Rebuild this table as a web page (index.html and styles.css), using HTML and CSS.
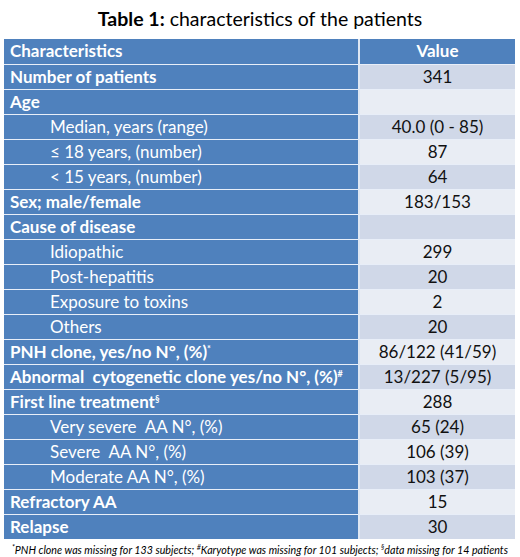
FILE: index.html
```html
<!DOCTYPE html>
<html>
<head>
<meta charset="utf-8">
<link rel="stylesheet" href="styles.css">
</head>
<body>
<div class="page">
  <h1 class="title"><b>Table 1:</b> characteristics of the patients</h1>
  <table class="tbl">
    <thead>
      <tr><th class="lbl">Characteristics</th><th class="val">Value</th></tr>
    </thead>
    <tbody>
      <tr class="dk"><td class="lbl main">Number of patients</td><td class="val">341</td></tr>
      <tr class="lt"><td class="lbl main">Age</td><td class="val"></td></tr>
      <tr class="dk"><td class="lbl sub">Median, years (range)</td><td class="val">40.0 (0 - 85)</td></tr>
      <tr class="lt"><td class="lbl sub">≤ 18 years, (number)</td><td class="val">87</td></tr>
      <tr class="dk"><td class="lbl sub">&lt; 15 years, (number)</td><td class="val">64</td></tr>
      <tr class="lt"><td class="lbl main">Sex; male/female</td><td class="val">183/153</td></tr>
      <tr class="dk"><td class="lbl main">Cause of disease</td><td class="val"></td></tr>
      <tr class="lt"><td class="lbl sub">Idiopathic</td><td class="val">299</td></tr>
      <tr class="dk"><td class="lbl sub">Post-hepatitis</td><td class="val">20</td></tr>
      <tr class="lt"><td class="lbl sub">Exposure to toxins</td><td class="val">2</td></tr>
      <tr class="dk"><td class="lbl sub">Others</td><td class="val">20</td></tr>
      <tr class="lt"><td class="lbl main">PNH clone, yes/no N°, (%)<sup>*</sup></td><td class="val">86/122 (41/59)</td></tr>
      <tr class="dk"><td class="lbl main">Abnormal&nbsp; cytogenetic clone yes/no N°, (%)<sup>#</sup></td><td class="val">13/227 (5/95)</td></tr>
      <tr class="lt"><td class="lbl main">First line treatment<sup>§</sup></td><td class="val">288</td></tr>
      <tr class="dk"><td class="lbl sub">Very severe&nbsp; AA N°, (%)</td><td class="val">65 (24)</td></tr>
      <tr class="lt"><td class="lbl sub">Severe&nbsp; AA N°, (%)</td><td class="val">106 (39)</td></tr>
      <tr class="dk"><td class="lbl sub">Moderate AA N°, (%)</td><td class="val">103 (37)</td></tr>
      <tr class="lt"><td class="lbl main">Refractory AA</td><td class="val">15</td></tr>
      <tr class="dk"><td class="lbl main">Relapse</td><td class="val">30</td></tr>
    </tbody>
  </table>
  <p class="note"><sup>*</sup>PNH clone was missing for 133 subjects; <sup>#</sup>Karyotype was missing for 101 subjects; <sup>§</sup>data missing for 14 patients</p>
</div>
</body>
</html>
```

FILE: styles.css
```css
html, body {
  margin: 0;
  padding: 0;
  background: #ffffff;
}

.page {
  width: 520px;
  font-family: "Lato", "Liberation Sans", sans-serif;
  color: #000;
}

.title {
  margin: 0;
  padding-top: 7px;
  height: 31px;
  box-sizing: border-box;
  text-align: center;
  font-size: 19.5px;
  font-weight: 400;
  line-height: 24px;
  letter-spacing: 0;
}

.title b {
  font-weight: 700;
}

.tbl {
  margin: 8px 0 0 4px;
  width: 511px;
  border-collapse: collapse;
  table-layout: fixed;
}

.tbl tr {
  height: 25px;
}

.tbl th,
.tbl td {
  padding: 0;
  height: 24px;
  border-bottom: 1px solid #e8eef8;
  font-size: 17px;
  line-height: 22px;
  vertical-align: middle;
  white-space: nowrap;
  overflow: hidden;
}

.tbl .lbl {
  width: 348px;
  background: #4f81bd;
  color: #ffffff;
  text-align: left;
  border-right: 2px solid #dfe7f3;
}

.tbl th {
  font-weight: 700;
  background: #4f81bd;
  color: #fff;
}

.tbl th.lbl {
  padding-left: 6px;
}

.tbl th.val {
  text-align: center;
}

.tbl tr:last-child td {
  border-bottom: none;
}

.main {
  font-weight: 700;
  padding-left: 6px !important;
}

.sub {
  font-weight: 400;
  padding-left: 46px !important;
}

.val {
  text-align: center;
  color: #111;
}

.dk .val {
  background: #d0d8e8;
}

.lt .val {
  background: #e9edf4;
}

sup {
  font-size: 9px;
  line-height: 0;
  vertical-align: 6px;
}

.note {
  margin: 5px 0 0 0;
  text-align: center;
  font-size: 10.7px;
  font-style: italic;
  line-height: 12px;
}

.note sup {
  font-size: 7px;
  vertical-align: 4px;
}
```
